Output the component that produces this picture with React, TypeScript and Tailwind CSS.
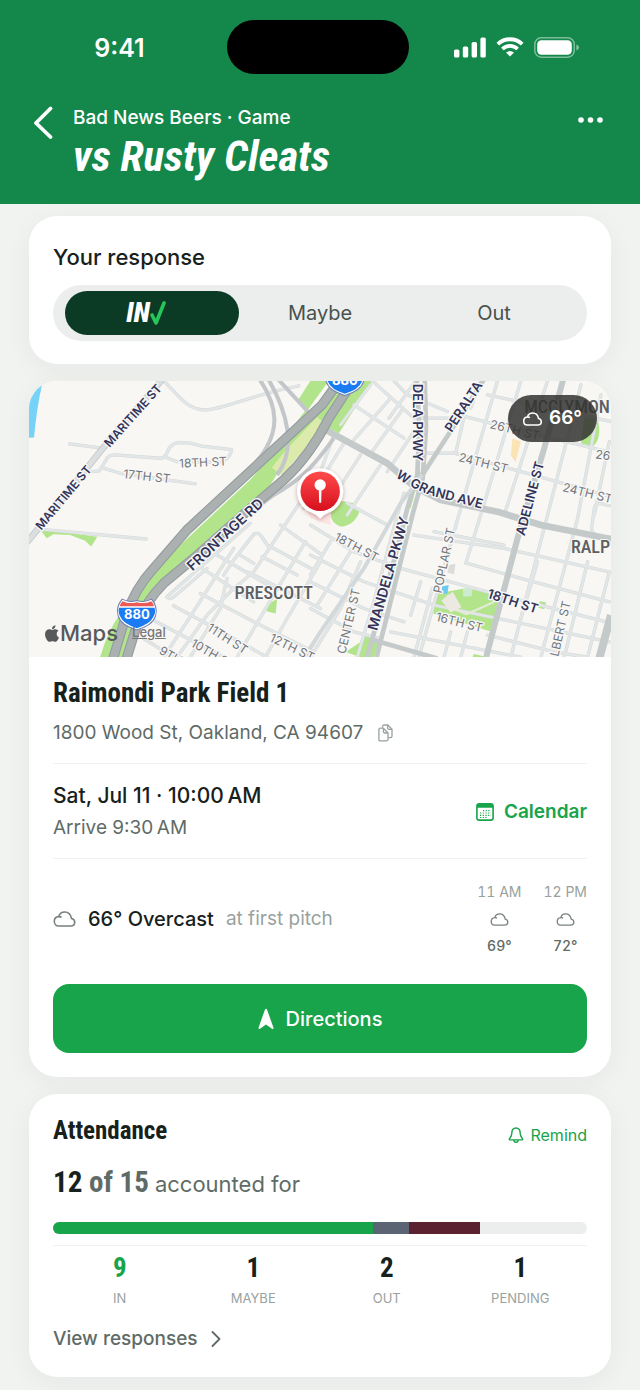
import type { ReactNode } from "react";
import { FaApple } from "react-icons/fa";

const STATS = [
  { label: "IN", count: 9, color: "text-[#18a44a]", bar: "bg-[#18a44a]" },
  { label: "MAYBE", count: 1, color: "text-[#17211c]", bar: "bg-[#5b6472]" },
  { label: "OUT", count: 2, color: "text-[#17211c]", bar: "bg-[#5c2130]" },
  { label: "PENDING", count: 1, color: "text-[#17211c]", bar: "" },
];

const ROSTER_SIZE = 15;

const FORECAST = [
  { hour: "11 AM", temp: "69°" },
  { hour: "12 PM", temp: "72°" },
];

type RoadLabel = { text: string; x: number; y: number; angle: number; size?: number };

// Map units: three per pixel
const MAJOR_LABELS: RoadLabel[] = [
  { text: "MARITIME ST", x: 338, y: 122, angle: -48 },
  { text: "MARITIME ST", x: 130, y: 368, angle: -50 },
  { text: "FRONTAGE RD", x: 614, y: 478, angle: -43, size: 42 },
  { text: "DELA PKWY", x: 1192, y: 143, angle: 90, size: 39 },
  { text: "PERALTA", x: 1328, y: 95, angle: -57, size: 39 },
  { text: "ADELINE ST", x: 1527, y: 370, angle: -75, size: 39 },
  { text: "MANDELA PKWY", x: 1103, y: 595, angle: -74, size: 42 },
  { text: "18TH ST", x: 1476, y: 678, angle: 18, size: 39 },
];

const MINOR_LABELS: RoadLabel[] = [
  { text: "17TH ST", x: 380, y: 304, angle: 6 },
  { text: "18TH ST", x: 548, y: 262, angle: -3 },
  { text: "11TH ST", x: 622, y: 790, angle: 33 },
  { text: "12TH ST", x: 815, y: 816, angle: 26 },
  { text: "10TH ST", x: 578, y: 836, angle: 30 },
  { text: "9TH ST", x: 476, y: 854, angle: 30 },
  { text: "26TH ST", x: 1482, y: 165, angle: 14 },
  { text: "24TH ST", x: 1388, y: 264, angle: 14 },
  { text: "24TH ST", x: 1700, y: 354, angle: 14 },
  { text: "26", x: 1746, y: 240, angle: 8 },
  { text: "18TH ST", x: 1008, y: 516, angle: 28 },
  { text: "16TH ST", x: 1316, y: 741, angle: 14 },
  { text: "POPLAR ST", x: 1270, y: 556, angle: -78 },
  { text: "CENTER ST", x: 984, y: 738, angle: -77 },
  { text: "LBERT ST", x: 1618, y: 760, angle: -77 },
];

const STREETS = [
  // west side
  "M430 18 C470 55 500 110 560 105 C630 98 690 60 835 33",
  "M148 207 L245 220",
  "M215 290 L238 288 L262 248 Q268 240 285 240 L420 250 Q436 250 442 230 Q452 204 478 203 L510 205 L545 214 L634 224 Q626 262 580 262 L470 260 L438 248",
  "M245 278 L300 295 L525 327",
  "M65 463 L378 492",
  // Prescott blocks
  "M440 665 L690 445",
  "M440 665 Q448 676 462 664 L560 580",
  "M900 290 L700 590 L640 640 L560 720 L470 846",
  "M700 478 Q712 470 722 482 L745 516",
  "M700 478 L640 555 L610 600",
  "M780 450 L905 540 M745 512 L880 585 M725 545 L830 600",
  "M855 500 L715 735 L650 846",
  "M900 560 L800 730 L735 846",
  "M590 540 L760 640 M545 580 L700 680 M660 540 L700 565",
  "M640 520 L500 740 L430 846",
  "M900 770 L850 846",
  "M460 692 L640 790 L740 846",
  "M540 655 L700 740 L880 830",
  "M390 730 L560 820 L610 846",
  "M370 790 L460 846",
  "M680 590 L900 700 M620 610 L600 700 L510 846",
  // north of Grand
  "M1055 18 L1180 130 L1310 130",
  "M1120 18 L1160 60 L1280 110",
  "M1050 30 L960 150 M1110 70 L1000 195 M1145 105 L1055 230 M1180 170 L1100 290",
  "M1000 90 L1150 190",
  "M1185 18 L1105 130",
  "M900 290 L940 180 M970 205 L850 400 M1020 240 L930 380 M1080 270 L980 420",
  "M1330 125 L1305 235 L1215 235",
  "M1330 125 L1470 160 L1765 232",
  "M1300 235 L1500 290 L1770 365",
  "M1430 18 L1300 470 L1195 846",
  "M1500 18 L1395 370 L1335 565",
  "M1580 18 L1450 420",
  "M1380 18 L1350 100 M1400 60 L1770 140",
  "M1680 30 L1580 420 L1470 846",
  "M1740 60 L1670 430 L1560 846",
  "M1765 200 L1720 420",
  "M1720 400 Q1725 380 1750 388 L1765 392 M1720 400 L1712 460 Q1714 488 1765 486",
  // south of Grand
  "M980 385 L1100 450 M870 450 L1000 530 L1140 580 L1400 650 L1765 742",
  "M870 540 L1030 620 L1240 690 L1765 800",
  "M870 620 L1030 700 L1150 740",
  "M870 700 L1000 770 L1080 790",
  "M1180 480 L1450 520 L1765 590",
  "M1340 565 L1500 610 L1765 680",
  "M1240 470 L1450 510",
  "M1150 355 L1130 420 L1060 680 L1010 846",
  "M1200 620 L1170 720 M1235 640 L1180 846 M1290 770 L1270 846 M1340 770 L1320 846",
  "M1765 590 L1700 846 M1700 560 L1630 846 M1550 560 L1500 730",
  "M1020 560 L960 700 L870 846",
  "M930 500 L870 600 M990 530 L890 690",
  "M1110 770 L1500 846 M1400 780 L1600 830 L1700 846",
];

function CloudIcon({ className }: { className?: string }) {
  return (
    <svg className={className} viewBox="0 0 22 16" fill="none" stroke="currentColor" strokeLinejoin="round" aria-hidden="true">
      <path d="M5 15 H17.2 C19.5 15 21.2 13.4 21.2 11.2 C21.2 9.3 19.9 7.8 18 7.5 C17.3 3.7 14.7 1 11.3 1 C8.4 1 6 2.6 5.2 5.6 C2.6 5.8 .8 7.7 .8 10.3 C.8 13 2.6 15 5 15 Z" />
      <path d="M5.2 5.6 C6.3 5.5 7.3 5.8 8 6.3" />
    </svg>
  );
}

function BellIcon() {
  return (
    <svg className="h-4 w-4" viewBox="0 0 16 16" fill="none" stroke="currentColor" strokeWidth="1.4" strokeLinejoin="round" aria-hidden="true">
      <path d="M8 1 C5.3 1 3.9 3 3.9 5.4 C3.9 9 2.9 9.8 1.6 11.4 C1 12.2 1.3 12.9 2.2 12.9 H13.8 C14.7 12.9 15 12.2 14.4 11.4 C13.1 9.8 12.1 9 12.1 5.4 C12.1 3 10.7 1 8 1 Z" />
      <path d="M5.8 13 C5.9 14.4 6.8 15.2 8 15.2 C9.2 15.2 10.1 14.4 10.2 13" />
    </svg>
  );
}

function CopyIcon() {
  return (
    <svg className="h-[18px] w-[15px]" viewBox="0 0 15 18" fill="none" stroke="currentColor" strokeWidth="1.3" strokeLinejoin="round" aria-hidden="true">
      <path d="M4.6 3.6 V2.4 Q4.6 1 6 1 H9.8 L14 5.2 V12 Q14 13.6 12.4 13.6 H10.2" />
      <path d="M9.6 1.2 V4 Q9.6 5.4 11 5.4 H13.8" />
      <path d="M2.4 4.2 H5.4 L10 9 V15.4 Q10 16.9 8.4 16.9 H2.4 Q.9 16.9 .9 15.4 V5.8 Q.9 4.2 2.4 4.2 Z" />
      <path d="M5.4 4.4 V7.6 Q5.4 9 6.8 9 H9.8" />
    </svg>
  );
}

function CalendarIcon() {
  return (
    <svg className="h-[18px] w-[18px]" viewBox="0 0 18 18" fill="none" aria-hidden="true">
      <rect x=".9" y=".9" width="16.2" height="16.2" rx="2.4" stroke="currentColor" strokeWidth="1.6" />
      <path d="M1 2.6 Q1 1 3 1 H15 Q17 1 17 2.6 V4.8 H1 Z" fill="currentColor" />
      <path d="M7 7.6 H15 M4 10 H15 M4 12.3 H15 M4 14.5 H12" stroke="currentColor" strokeWidth="1.2" strokeDasharray="1.2 1.5" />
    </svg>
  );
}

function InterstateShield({ x, y }: { x: number; y: number }) {
  return (
    <g transform={`translate(${x} ${y})`}>
      <path d="M-44 -44 Q-22 -32 0 -40 Q22 -32 44 -44 Q64 -20 56 6 Q48 34 0 48 Q-48 34 -56 6 Q-64 -20 -44 -44 Z" fill="#fff" stroke="#6a7fb0" strokeWidth="3" />
      <path d="M-43 -38 Q-22 -28 0 -35 Q22 -28 43 -38 Q50 -31 51 -23 H-51 Q-50 -31 -43 -38 Z" fill="#ee5a55" />
      <path d="M-53 -18 H53 Q57 -4 51 6 Q42 30 0 43 Q-42 30 -51 6 Q-57 -4 -53 -18 Z" fill="#1b7bf2" />
      <text y="16" textAnchor="middle" fill="#fff" fontSize="39" fontWeight="700">
        880
      </text>
    </g>
  );
}

function RoadName({ label, major }: { label: RoadLabel; major?: boolean }) {
  const size = label.size ?? 36;
  return (
    <text
      transform={`translate(${label.x} ${label.y}) rotate(${label.angle})`}
      y={Math.round(size * 0.36)}
      textAnchor="middle"
      fontSize={size}
      fontWeight={major ? 600 : 400}
      fill={major ? "#33345a" : "#73767c"}
      stroke="#f8f8f6"
      strokeWidth="8"
      strokeLinejoin="round"
      paintOrder="stroke"
    >
      {label.text}
    </text>
  );
}

function VenueMap() {
  return (
    <svg
      className="block h-[276px] w-full"
      viewBox="27 18 1743 828"
      preserveAspectRatio="xMidYMid slice"
      role="img"
      aria-label="Map of Raimondi Park"
      fontFamily="Inter, 'Liberation Sans', sans-serif"
    >
      <rect x="-400" y="-400" width="2800" height="1800" fill="#f8f7f4" />
      <path d="M0 60 Q40 24 66 30 Q50 100 42 188 L0 190 Z" fill="#76d2f7" />

      {/* Parks and verges */}
      <g fill="#b2e58b">
        <path d="M62 466 L105 468 L232 485 L213 514 L195 497 L150 480 L100 478 L80 490 Z" />
        <path d="M870 18 L925 18 L830 150 L790 190 L860 100 L830 80 Z" />
        <path d="M985 60 L1022 18 L1056 18 L955 175 L918 155 Z" />
        <path d="M740 690 L770 670 L766 715 L738 708 Z" />
        <path d="M948 375 L1000 385 L1016 412 Q1000 452 962 455 Q930 445 930 415 Z" />
        <path d="M1244 656 L1330 640 L1440 650 L1412 770 L1238 716 Z" />
        <path d="M1556 678 L1576 682 L1570 702 L1552 698 Z" />
        <path d="M975 830 L1020 800 L1036 780 L1080 790 L1060 846 L1020 846 Z" />
        <path d="M1186 290 L1200 290 L1170 400 L1160 400 Z" />
        <path d="M1690 130 L1730 130 Q1745 190 1715 215 L1680 205 Z" />
        <path d="M300 715 L330 660 L290 760 L268 846 L240 846 Q262 770 300 715 Z" />
        <path d="M1360 836 L1400 846 L1355 846 Z" />
      </g>
      <path d="M1475 190 L1500 200 L1484 262 L1470 240 Z" fill="#fbe3b4" />
      <path d="M1505 78 L1532 78 L1530 100 L1500 96 Z" fill="#fbe3b4" />
      <path d="M1326 642 L1356 636 L1352 664 L1328 664 Z" fill="#cdeccd" />
      <path d="M1264 634 L1284 630 L1280 656 L1262 656 Z" fill="#6cc9f2" />
      <path d="M1284 570 L1304 566 L1300 598 L1280 592 Z" fill="#dcdcda" />
      <path d="M850 385 L930 395 L930 450 L870 430 Z" fill="#fbe4e2" />

      {/* Streets */}
      <g fill="none" stroke="#d3d9da" strokeWidth="10" strokeLinecap="round" strokeLinejoin="round">
        {STREETS.map((d) => (
          <path key={d} d={d} />
        ))}
      </g>
      <g fill="none" stroke="#e2e6e6" strokeWidth="7" strokeLinecap="round" strokeLinejoin="round">
        {STREETS.map((d) => (
          <path key={d} d={d} />
        ))}
      </g>
      <path d="M1290 690 Q1330 720 1340 716 Q1400 690 1420 680 M1280 660 L1310 706" fill="none" stroke="#e3ead6" strokeWidth="7" />
      <path d="M1262 676 L1296 650 L1322 696 L1290 712 Z" fill="#ece8e2" />

      {/* Arterials */}
      <g fill="none" strokeLinejoin="round">
        <path d="M10 515 L80 430 L240 230 L425 15" stroke="#c8cdcf" strokeWidth="20" />
        <path d="M10 515 L80 430 L240 230 L425 15" stroke="#dcdfe0" strokeWidth="14" />
        <g stroke="#c4c9ca" strokeWidth="14">
          <path d="M906 160 L1100 265 L1180 335 L1260 375 L1430 410 L1560 450 L1770 492" strokeWidth="20" />
          <path d="M1188 10 L1196 160 L1190 300 L1160 400 L1130 520 L1040 846" />
          <path d="M1212 10 L1216 160 L1206 310 L1178 410 L1150 520 L1068 846" />
          <path d="M1392 10 L1205 300" />
          <path d="M1205 300 L1140 385 L1030 580 L900 770 L850 850" stroke="#d3d9da" strokeWidth="12" />
          <path d="M1628 10 L1570 220 L1490 490 L1395 850" strokeWidth="18" />
          <path d="M1770 720 L1735 850" strokeWidth="24" />
          <path d="M1060 795 L1250 850" />
        </g>
      </g>

      {/* I-880 */}
      <g fill="none" strokeLinejoin="round">
        <g stroke="#c3c7c9" strokeWidth="12">
          <path d="M715 10 C770 90 790 170 700 270 C640 335 560 410 500 460" />
          <path d="M770 10 L880 130" />
          <path d="M940 190 C890 260 850 310 760 360 L640 450" />
        </g>
        <path d="M800 220 L740 280 L600 420 L500 520 L600 470 L740 345 L800 250 Z" fill="#b2e58b" />
        <path d="M985 18 L905 110 L700 335 L480 540 L380 640 L330 740 L295 850" stroke="#b2e58b" strokeWidth="44" />
        <path d="M905 140 L810 240 L770 290" stroke="#dcebab" strokeWidth="40" />
        <path d="M742 10 C800 110 830 220 770 300" stroke="#c3c7c9" strokeWidth="12" />
        <path d="M970 0 L905 90 L640 335 L500 465 L400 580 Q345 640 318 720 L276 860" stroke="#969d9f" strokeWidth="30" />
        <path d="M970 0 L905 90 L640 335 L500 465 L400 580 Q345 640 318 720 L276 860" stroke="#abb0b1" strokeWidth="23" />
        <path d="M1010 0 L925 130 Q870 240 790 315 L690 400 L520 550 L430 625 Q375 680 350 750 L316 860" stroke="#969d9f" strokeWidth="30" />
        <path d="M1010 0 L925 130 Q870 240 790 315 L690 400 L520 550 L430 625 Q375 680 350 750 L316 860" stroke="#abb0b1" strokeWidth="23" />
      </g>

      {MINOR_LABELS.map((label) => (
        <RoadName key={`${label.text}-${label.x}`} label={label} />
      ))}
      {MAJOR_LABELS.map((label) => (
        <RoadName key={`${label.text}-${label.x}`} label={label} major />
      ))}
      <path id="grand-ave" d="M1124 306 Q1180 346 1240 364 Q1320 386 1430 412" fill="none" />
      <text fontSize="39" fontWeight="600" fill="#33345a" stroke="#f8f8f6" strokeWidth="8" strokeLinejoin="round" paintOrder="stroke">
        <textPath href="#grand-ave">W GRAND AVE</textPath>
      </text>
      <g
        fontFamily="'Roboto Condensed', Roboto, sans-serif"
        fontSize="54"
        fontWeight="500"
        fill="#5d5f62"
        stroke="#f8f8f6"
        strokeWidth="6"
        paintOrder="stroke"
      >
        <text x="760" y="671" textAnchor="middle">PRESCOTT</text>
        <text x="1650" y="533">RALP</text>
        <text x="1510" y="116">MCCLYMON</text>
      </g>

      <InterstateShield x={350} y={716} />
      <InterstateShield x={973} y={14} />

      {/* Pin */}
      <defs>
        <linearGradient id="pin-red" x1="0" y1="0" x2="0" y2="1">
          <stop offset="0" stopColor="#ff4b4b" />
          <stop offset="1" stopColor="#d60f1e" />
        </linearGradient>
        <filter id="pin-shadow" x="-30%" y="-30%" width="160%" height="160%">
          <feDropShadow dx="0" dy="4" stdDeviation="7" floodColor="#5a2020" floodOpacity=".35" />
        </filter>
      </defs>
      <g transform="translate(899 349)">
        <path
          d="M-69 0 A69 69 0 0 1 69 0 C69 34 46 58 24 64 Q12 68 0 82 Q-12 68 -24 64 C-46 58 -69 34 -69 0 Z"
          fill="#fff"
          filter="url(#pin-shadow)"
        />
        <circle r="59" fill="url(#pin-red)" />
        <circle cy="-19" r="17" fill="#fff" />
        <path d="M-4 -4 H4 L3 34 H-3 Z" fill="#fff" />
      </g>
    </svg>
  );
}

function Card({ children, className = "" }: { children: ReactNode; className?: string }) {
  return (
    <section className={`overflow-hidden rounded-[28px] bg-white shadow-[0_6px_28px_rgba(20,40,30,0.05)] ${className}`}>
      {children}
    </section>
  );
}

function StatusBar() {
  return (
    <div className="flex items-center pl-1">
      <div className="flex-1 pt-0.5 pl-2 text-center text-[25px] leading-9 font-semibold">9:41</div>
      <div className="h-[54px] w-[182px] rounded-full bg-black" />
      <div className="flex flex-1 items-center justify-center gap-[10px] pr-4">
        <svg className="h-[21px] w-8" viewBox="0 0 32 21" fill="currentColor" aria-hidden="true">
          <rect x="0" y="12.5" width="5.4" height="8" rx="1.6" />
          <rect x="8.8" y="9.5" width="5.4" height="11" rx="1.6" />
          <rect x="17.6" y="5" width="5.4" height="15.5" rx="1.6" />
          <rect x="26.4" y="0.5" width="5.4" height="20" rx="1.6" />
        </svg>
        <svg className="h-5 w-[28px]" viewBox="0 0 28 20" fill="none" stroke="currentColor" strokeWidth="3.8" aria-hidden="true">
          <path d="M1.8 7.2 A17.5 17.5 0 0 1 26.2 7.2" />
          <path d="M6.4 12 A11 11 0 0 1 21.6 12" />
          <path d="M14 19.6 L10 15.6 Q14 12.4 18 15.6 Z" fill="currentColor" stroke="none" />
        </svg>
        <svg className="h-[21px] w-[46px]" viewBox="0 0 46 21" fill="none" aria-hidden="true">
          <rect x=".8" y=".8" width="39.4" height="19.4" rx="6.4" stroke="#fff" strokeOpacity=".45" strokeWidth="1.5" />
          <rect x="3.2" y="3.2" width="34.6" height="14.6" rx="4.2" fill="#fff" />
          <path d="M42.4 7.4 Q45 8.4 45 10.5 Q45 12.6 42.4 13.6 Z" fill="#fff" fillOpacity=".5" />
        </svg>
      </div>
    </div>
  );
}

function Header() {
  return (
    <header className="bg-[#14874b] pt-5 pb-6 text-white">
      <StatusBar />
      <div className="mt-[30px] flex items-start pr-9 pl-[33px]">
        <button type="button" aria-label="Back" className="mt-px w-10 shrink-0">
          <svg className="h-9 w-5" viewBox="0 0 20 36" fill="none" stroke="currentColor" strokeWidth="3.8" strokeLinecap="round" strokeLinejoin="round">
            <path d="M17.5 3.5 L3 18 L17.5 32" />
          </svg>
        </button>
        <div className="flex-1">
          <p className="text-[19px] leading-7 font-medium">Bad News Beers · Game</p>
          <h1 className="font-['Roboto_Condensed',sans-serif] text-[43px] leading-[48px] font-bold italic">
            vs Rusty Cleats
          </h1>
        </div>
        <button type="button" aria-label="More options" className="mt-3">
          <svg className="h-2 w-[27px]" viewBox="0 0 27 8" fill="currentColor">
            <circle cx="4" cy="4" r="2.8" />
            <circle cx="13.5" cy="4" r="2.8" />
            <circle cx="23" cy="4" r="2.8" />
          </svg>
        </button>
      </div>
    </header>
  );
}

function ResponseCard() {
  return (
    <Card className="px-6 pt-[25px] pb-[23px]">
      <h2 className="text-[22px] leading-8 font-medium text-[#17211c]">Your response</h2>
      <div className="mt-3 grid h-14 grid-cols-3 rounded-full bg-[#eceeed] p-1.5 text-[20px] text-[#47524d]">
        <button
          type="button"
          aria-pressed="true"
          className="-mr-1.5 ml-1.5 flex items-center justify-center rounded-full bg-[#0b3b24] pr-3"
        >
          <span className="font-['Roboto_Condensed',sans-serif] text-[27px] leading-8 font-black text-white italic">IN</span>
          <svg className="h-[26px] w-4" viewBox="0 0 16 26" fill="none" stroke="#27c55b" strokeWidth="3.6" strokeLinecap="round" strokeLinejoin="round" aria-hidden="true">
            <path d="M2 15 L6 23 L14 3" />
          </svg>
        </button>
        <button type="button">Maybe</button>
        <button type="button">Out</button>
      </div>
    </Card>
  );
}

function VenueCard() {
  return (
    <Card>
      <div className="relative">
        <VenueMap />
        <div className="absolute top-[14px] right-[14px] flex h-[47px] items-center gap-[7px] rounded-full bg-[#333230]/85 px-[15px] text-[19px] font-semibold text-white">
          <CloudIcon className="h-[14px] w-[19px] stroke-[1.8]" />
          66°
        </div>
        <div className="absolute bottom-[10px] left-[15px] flex items-center text-[#58595b]">
          <FaApple className="h-[19px] w-4" aria-hidden="true" />
          <span className="text-[22px] leading-7 font-medium">Maps</span>
          <a href="#legal" className="ml-[14px] text-[13px] font-medium text-[#76787a] underline">
            Legal
          </a>
        </div>
      </div>

      <div className="px-6 pb-6">
        <div className="border-b border-[#f1f3f2] pt-4 pb-4">
          <h2 className="font-['Roboto_Condensed',sans-serif] text-[27px] leading-10 font-bold text-[#17211c]">
            Raimondi Park Field 1
          </h2>
          <div className="mt-1.5 flex items-center gap-[15px] text-[19px] leading-7 text-[#5f6b66]">
            1800 Wood St, Oakland, CA 94607
            <button type="button" aria-label="Copy address" className="text-[#98a29e]">
              <CopyIcon />
            </button>
          </div>
        </div>

        <div className="flex items-center justify-between border-b border-[#f1f3f2] pt-[18px] pb-4">
          <div className="flex flex-col gap-1 leading-7">
            <p className="text-[21px] font-medium text-[#17211c]">Sat, Jul 11 · 10:00{"\u202f"}AM</p>
            <p className="text-[19px] text-[#5f6b66]">Arrive 9:30{"\u202f"}AM</p>
          </div>
          <button type="button" className="flex items-center gap-2.5 text-[19px] font-semibold text-[#18a44a]">
            <CalendarIcon />
            Calendar
          </button>
        </div>

        <div className="flex items-center justify-between pt-[21px] pb-[26px]">
          <div className="flex items-center text-[20px] leading-7">
            <CloudIcon className="h-4 w-[23px] stroke-[1.6] text-[#77817d]" />
            <span className="ml-3 font-medium text-[#17211c]">66° Overcast</span>
            <span className="ml-3 text-[19px] text-[#98a29e]">at first pitch</span>
          </div>
          <div className="flex gap-[22px]">
            {FORECAST.map((entry) => (
              <div key={entry.hour} className="flex flex-col items-center gap-1 text-[14px] leading-6 tabular-nums">
                <span className="text-[#98a29e]">{entry.hour}</span>
                <span className="flex h-[22px] items-center">
                  <CloudIcon className="h-[13px] w-[19px] stroke-[1.6] text-[#77817d]" />
                </span>
                <span className="font-medium text-[#5f6b66]">{entry.temp}</span>
              </div>
            ))}
          </div>
        </div>

        <button
          type="button"
          className="flex h-[69px] w-full items-center justify-center gap-3 rounded-2xl bg-[#18a44a] text-[20px] font-medium text-white"
        >
          <svg className="h-[22px] w-4" viewBox="0 0 16 22" fill="currentColor" aria-hidden="true">
            <path d="M6.9 1.8 Q8 -.4 9.1 1.8 L15.4 19.4 Q15.9 21.6 14 20.8 L8 16.4 L2 20.8 Q.1 21.6 .6 19.4 Z" />
          </svg>
          Directions
        </button>
      </div>
    </Card>
  );
}

function AttendanceCard() {
  return (
    <Card className="px-6 pt-[19px] pb-6">
      <div className="flex items-center justify-between">
        <h2 className="font-['Roboto_Condensed',sans-serif] text-[25px] leading-9 font-bold text-[#17211c]">Attendance</h2>
        <button type="button" className="mt-2 flex items-center gap-1.5 text-[16px] leading-6 text-[#18a44a]">
          <BellIcon />
          Remind
        </button>
      </div>
      <p className="mt-3 flex h-10 items-baseline gap-1.5 leading-10">
        <span className="font-['Roboto_Condensed',sans-serif] text-[29px] leading-[42px] font-bold text-[#5f6b66]">
          <span className="text-[#17211c]">12</span> of 15
        </span>
        <span className="text-[22px] text-[#5f6b66]">accounted for</span>
      </p>
      <div className="mt-[21px] flex h-3 overflow-hidden rounded-full bg-[#eceeee]">
        {STATS.filter((stat) => stat.bar).map((stat) => (
          <div key={stat.label} className={stat.bar} style={{ width: `${(stat.count / ROSTER_SIZE) * 100}%` }} />
        ))}
      </div>
      <dl className="mt-[11px] grid grid-cols-4 border-t border-[#f1f3f2] pt-2 text-center">
        {STATS.map((stat) => (
          <div key={stat.label} className="flex flex-col-reverse gap-1.5">
            <dt className="text-[13px] leading-5 text-[#98a29e]">{stat.label}</dt>
            <dd className={`font-['Roboto_Condensed',sans-serif] text-[27px] leading-7 font-bold ${stat.color}`}>{stat.count}</dd>
          </div>
        ))}
      </dl>
      <a href="#responses" className="mt-[17px] flex items-center gap-[13px] text-[19px] leading-7 font-medium text-[#5f6b66]">
        View responses
        <svg className="h-4 w-[10px]" viewBox="0 0 10 16" fill="none" stroke="currentColor" strokeWidth="1.8" strokeLinecap="round" strokeLinejoin="round" aria-hidden="true">
          <path d="M1.5 1 L8.5 8 L1.5 15" />
        </svg>
      </a>
    </Card>
  );
}

export default function App() {
  return (
    <div className="min-h-screen bg-[#f1f3f1] font-['Inter','Liberation_Sans',sans-serif]">
      <Header />
      <main className="flex flex-col gap-[17px] px-[29px] pt-3 pb-[13px]">
        <ResponseCard />
        <VenueCard />
        <AttendanceCard />
      </main>
    </div>
  );
}
